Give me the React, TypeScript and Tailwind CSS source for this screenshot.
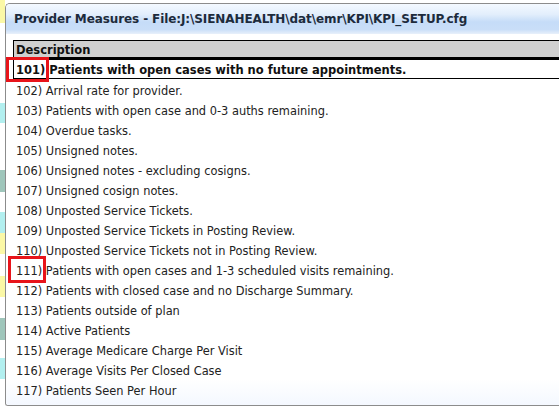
import React from "react";

const rows = [
  "102) Arrival rate for provider.",
  "103) Patients with open case and 0-3 auths remaining.",
  "104) Overdue tasks.",
  "105) Unsigned notes.",
  "106) Unsigned notes - excluding cosigns.",
  "107) Unsigned cosign notes.",
  "108) Unposted Service Tickets.",
  "109) Unposted Service Tickets in Posting Review.",
  "110) Unposted Service Tickets not in Posting Review.",
  "111) Patients with open cases and 1-3 scheduled visits remaining.",
  "112) Patients with closed case and no Discharge Summary.",
  "113) Patients outside of plan",
  "114) Active Patients",
  "115) Average Medicare Charge Per Visit",
  "116) Average Visits Per Closed Case",
  "117) Patients Seen Per Hour",
];

const strip: [string, number][] = [
  ["bg-[#fbf8a6]", 23],
  ["bg-white", 80],
  ["bg-[#b2efef]", 20],
  ["bg-white", 47],
  ["bg-[#9fc6bb]", 22],
  ["bg-white", 20],
  ["bg-[#b2efef]", 21],
  ["bg-[#fbf8a6]", 21],
  ["bg-white", 22],
  ["bg-[#fbf8a6]", 21],
  ["bg-white", 21],
  ["bg-[#9fc6bb]", 22],
  ["bg-white", 18],
  ["bg-[#b2efef]", 21],
  ["bg-white", 29],
];

export default function App() {
  return (
    <div
      className="relative flex w-[559px] h-[408px] overflow-hidden bg-white"
      style={{ fontFamily: '"DejaVu Sans", Verdana, sans-serif' }}
    >
      <div className="flex flex-col w-[5px] shrink-0">
        {strip.map(([c, h], i) => (
          <div key={i} className={c} style={{ height: h }} />
        ))}
      </div>
      <div className="flex flex-col flex-1 mt-[3px] h-[403px] border border-r-0 border-[#8c8c8c] rounded-tl-[5px] rounded-bl-[3px] bg-white overflow-hidden">
        <div className="h-[30px] shrink-0 flex items-center pl-[8px] pb-[1px] bg-[linear-gradient(to_bottom,#f4f9ff_0%,#e2eefc_35%,#c5dcf8_60%,#c9def8_85%,#e8f0fa_100%)]">
          <span className="text-[12px] font-bold text-[#1d2b3c] tracking-[-0.1px]">
            Provider Measures - File:J:\SIENAHEALTH\dat\emr\KPI\KPI_SETUP.cfg
          </span>
        </div>
        <div className="flex flex-col pl-[7px] pt-[6px] flex-1 bg-[linear-gradient(to_bottom,#ffffff_93%,#f4f8ff_100%)]">
          <div className="h-[18px] flex items-center border border-r-0 border-black bg-[#d0d0d0] pl-[2px] pt-[3px]">
            <span className="text-[11.5px] font-bold text-[#111]">Description</span>
          </div>
          <div className="h-[21px] flex items-center border-t-2 border-b border-l border-black bg-white pl-[2px] pt-[3px]">
            <span className="text-[11.5px] font-bold text-[#111]">
              101) Patients with open cases with no future appointments.
            </span>
          </div>
          {rows.map((r) => (
            <div key={r} className="h-[20px] flex items-center pl-[3px] pt-[6px]">
              <span className="text-[11.4px] text-[#222]">{r}</span>
            </div>
          ))}
        </div>
      </div>
      <div className="absolute left-[6px] top-[57px] w-[43px] h-[25px] border-[3px] border-[#e8141a]" />
      <div className="absolute left-[8px] top-[256px] w-[38px] h-[27px] border-[3px] border-[#e8141a]" />
    </div>
  );
}
